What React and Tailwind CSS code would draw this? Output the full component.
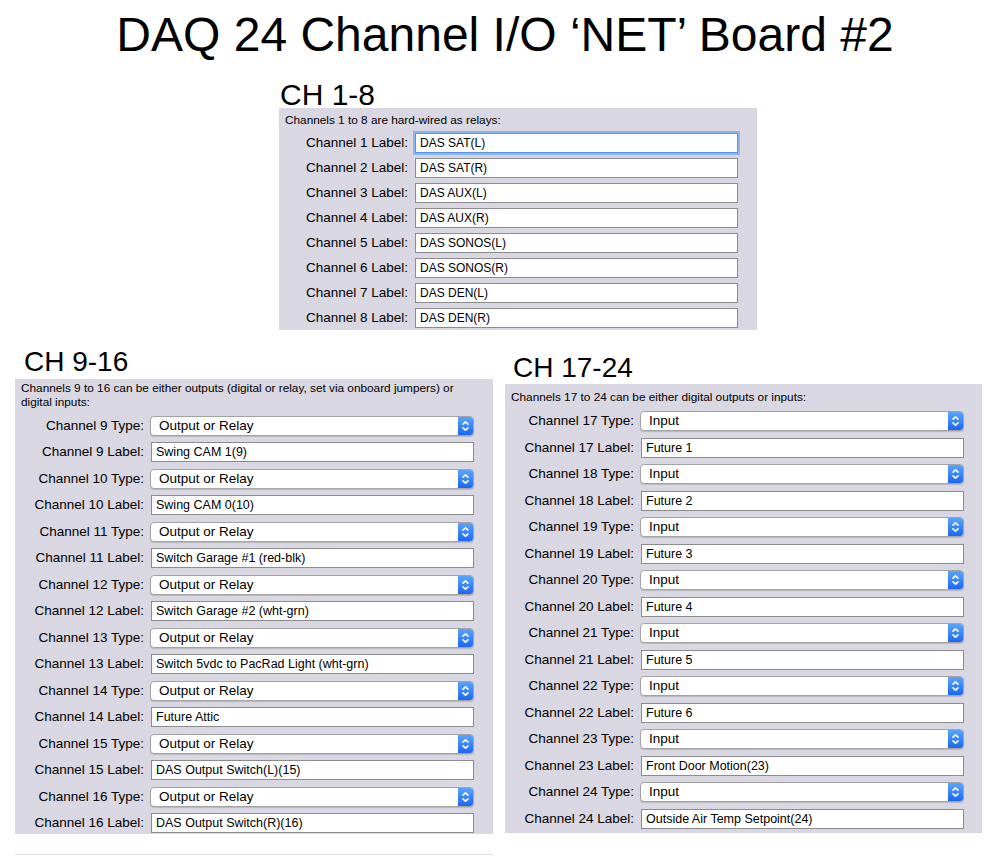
const relays = [
  'DAS SAT(L)',
  'DAS SAT(R)',
  'DAS AUX(L)',
  'DAS AUX(R)',
  'DAS SONOS(L)',
  'DAS SONOS(R)',
  'DAS DEN(L)',
  'DAS DEN(R)',
];

const outputs = [
  'Swing CAM 1(9)',
  'Swing CAM 0(10)',
  'Switch Garage #1 (red-blk)',
  'Switch Garage #2 (wht-grn)',
  'Switch 5vdc to PacRad Light (wht-grn)',
  'Future Attic',
  'DAS Output Switch(L)(15)',
  'DAS Output Switch(R)(16)',
];

const inputs = [
  'Future 1',
  'Future 2',
  'Future 3',
  'Future 4',
  'Future 5',
  'Future 6',
  'Front Door Motion(23)',
  'Outside Air Temp Setpoint(24)',
];

function Label({ children }) {
  return <span className="w-[129px] shrink-0 text-right text-[13.5px] leading-none text-black">{children}</span>;
}

function TextBox({ value, focused, size = 'text-[12.5px]' }) {
  return (
    <input
      readOnly
      value={value}
      className={`w-[323px] h-[20px] bg-white border px-[4px] ${size} text-black outline-none ${
        focused ? 'border-[#5b93e0] shadow-[0_0_0_2px_#88b6f0]' : 'border-[#8c8c8c]'
      }`}
    />
  );
}

function Popup({ value }) {
  return (
    <div className="flex w-[324px] h-[20px] -ml-[1px] rounded-[4px] border border-[#a3a3a3] bg-white shadow-[0_1px_1px_rgba(0,0,0,0.15)] overflow-hidden">
      <span className="flex-1 pl-[8px] text-[13.5px] leading-[18px] text-black">{value}</span>
      <span className="w-[15px] flex items-center justify-center bg-gradient-to-b from-[#5aa4fb] to-[#1b66f2]">
        <svg width="9" height="14" viewBox="0 0 9 14" fill="none" stroke="white" strokeWidth="1.6" strokeLinecap="round" strokeLinejoin="round">
          <path d="M2 5.2 L4.5 2.8 L7 5.2" />
          <path d="M2 8.8 L4.5 11.2 L7 8.8" />
        </svg>
      </span>
    </div>
  );
}

function Row({ label, children }) {
  return (
    <div className="flex items-center gap-[7px]">
      <Label>{label}</Label>
      {children}
    </div>
  );
}

export default function App() {
  return (
    <div className="w-[1000px] h-[861px] overflow-hidden bg-white text-black font-['Liberation_Sans',Arial,sans-serif]">
      <h1 className="pt-[11px] pl-[10px] text-center text-[48px] leading-[48px] font-normal">
        DAQ 24 Channel I/O ‘NET’ Board #2
      </h1>

      {/* CH 1-8 */}
      <section className="ml-[279px] mt-[23px] w-[478px]">
        <h2 className="pl-[1px] text-[30px] leading-[26px]">CH 1-8</h2>
        <div className="bg-[#d9d7e1] pt-[5px] pb-[2px]">
          <p className="pl-[6px] text-[11.8px] leading-[14px]">Channels 1 to 8 are hard-wired as relays:</p>
          <div className="mt-[6px] flex flex-col gap-[5px]">
            {relays.map((r, i) => (
              <Row key={r} label={`Channel ${i + 1} Label:`}>
                <TextBox value={r} focused={i === 0} size="text-[12px]" />
              </Row>
            ))}
          </div>
        </div>
      </section>

      <div className="flex items-start">
        {/* CH 9-16 */}
        <section className="ml-[15px] mt-[19px] w-[478px]">
          <h2 className="pl-[9px] text-[28px] leading-[26px]">CH 9-16</h2>
          <div className="mt-[4px] bg-[#d9d7e1] pt-[2px] pb-[1px]">
            <p className="pl-[6px] text-[11.8px] leading-[14px]">
              Channels 9 to 16 can be either outputs (digital or relay, set via onboard jumpers) or
              <br />
              digital inputs:
            </p>
            <div className="mt-[7px] flex flex-col gap-[7px]">
              {outputs.map((o, i) => (
                <div key={o} className="flex flex-col gap-[6px]">
                  <Row label={`Channel ${i + 9} Type:`}>
                    <Popup value="Output or Relay" />
                  </Row>
                  <Row label={`Channel ${i + 9} Label:`}>
                    <TextBox value={o} />
                  </Row>
                </div>
              ))}
            </div>
          </div>
          <div className="mt-[20px] h-px bg-[#dddce3]" />
        </section>

        {/* CH 17-24 */}
        <section className="ml-[12px] mt-[25px] w-[477px]">
          <h2 className="pl-[8px] text-[28px] leading-[26px]">CH 17-24</h2>
          <div className="mt-[3px] bg-[#d9d7e1] pt-[6px] pb-[4px]">
            <p className="pl-[6px] text-[11.8px] leading-[14px]">Channels 17 to 24 can be either digital outputs or inputs:</p>
            <div className="mt-[7px] flex flex-col gap-[6px]">
              {inputs.map((v, i) => (
                <div key={v} className="flex flex-col gap-[7px]">
                  <Row label={`Channel ${i + 17} Type:`}>
                    <Popup value="Input" />
                  </Row>
                  <Row label={`Channel ${i + 17} Label:`}>
                    <TextBox value={v} />
                  </Row>
                </div>
              ))}
            </div>
          </div>
        </section>
      </div>
    </div>
  );
}
